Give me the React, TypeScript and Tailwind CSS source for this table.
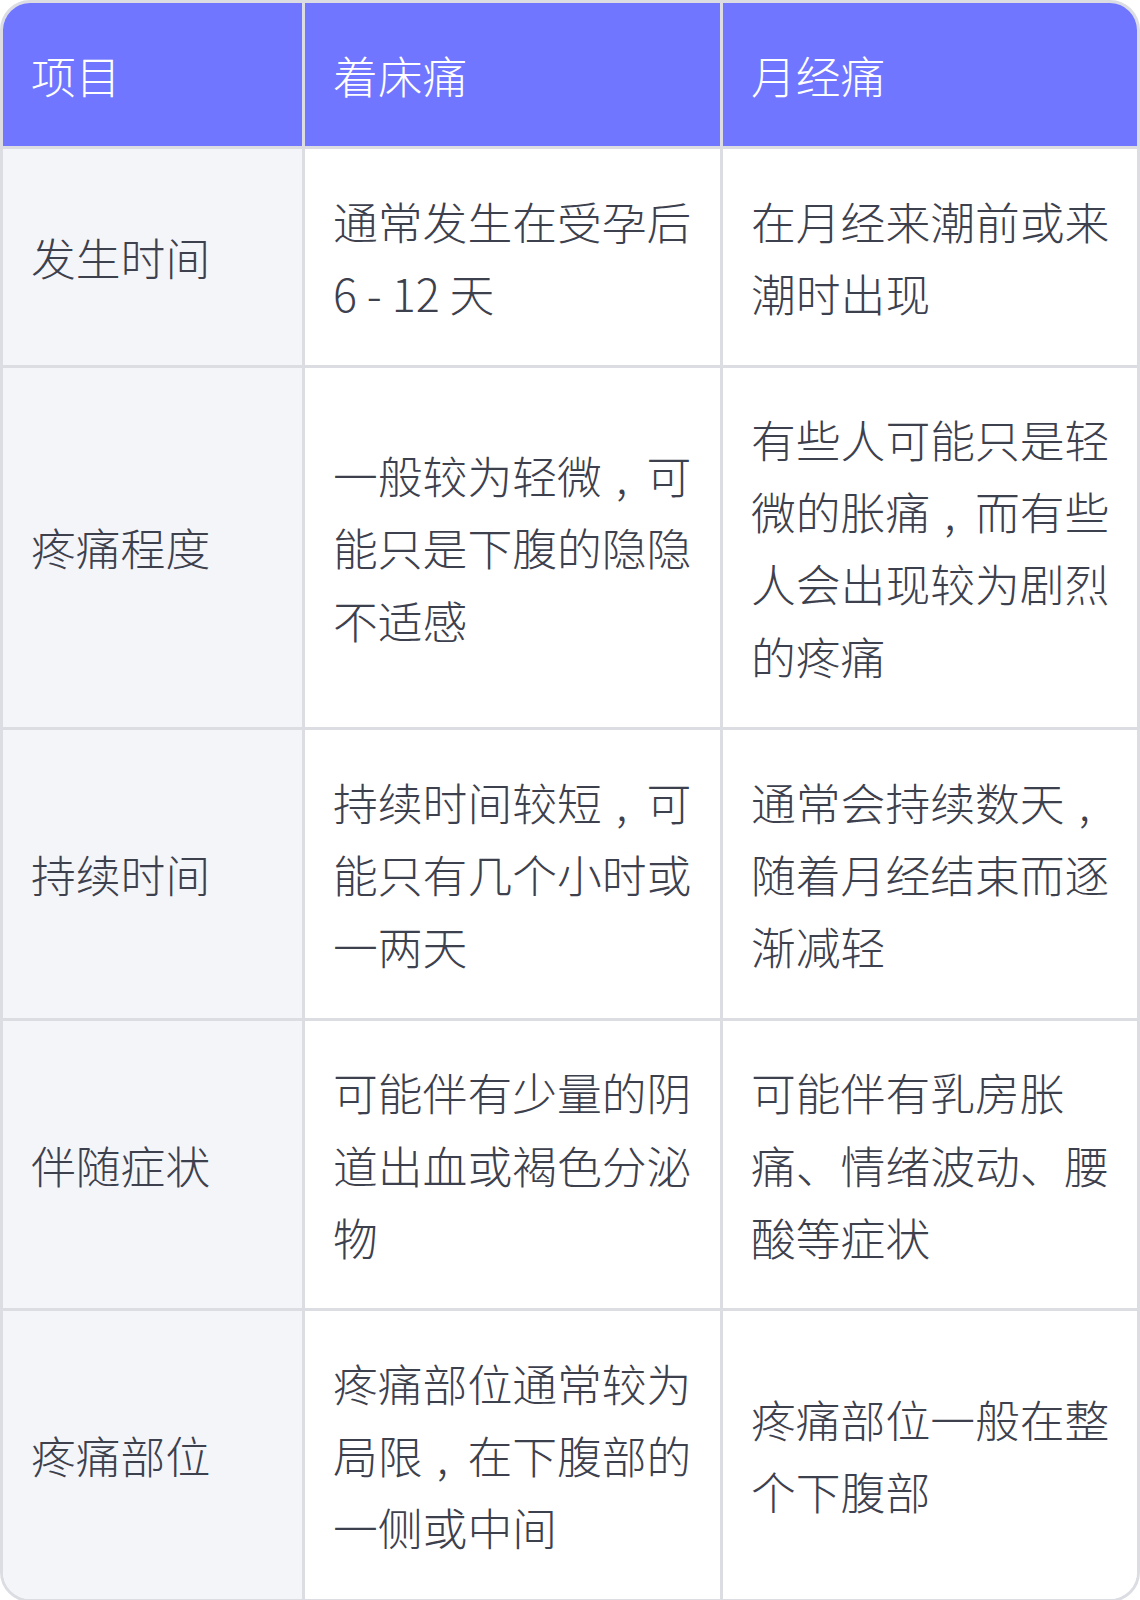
import React from "react";

const rows: [string, string, string][] = [
  ["发生时间", "通常发生在受孕后 6 - 12 天", "在月经来潮前或来潮时出现"],
  ["疼痛程度", "一般较为轻微，可能只是下腹的隐隐不适感", "有些人可能只是轻微的胀痛，而有些人会出现较为剧烈的疼痛"],
  ["持续时间", "持续时间较短，可能只有几个小时或一两天", "通常会持续数天，随着月经结束而逐渐减轻"],
  ["伴随症状", "可能伴有少量的阴道出血或褐色分泌物", "可能伴有乳房胀痛、情绪波动、腰酸等症状"],
  ["疼痛部位", "疼痛部位通常较为局限，在下腹部的一侧或中间", "疼痛部位一般在整个下腹部"],
];

function Text({ s }: { s: string }) {
  const parts = s.split(/(，)/);
  return (
    <span className="break-all">
      {parts.map((p, i) =>
        p === "，" ? (
          <span key={i} className="inline-block w-[1em] text-center pr-[0.12em]">
            ,
          </span>
        ) : (
          <React.Fragment key={i}>{p}</React.Fragment>
        )
      )}
    </span>
  );
}

export default function App() {
  const font = { fontFamily: '"Noto Sans CJK SC", "Noto Sans", sans-serif' };
  return (
    <div className="w-[1140px] bg-white" style={font}>
      <div className="border-[3px] border-[#dcdde3] rounded-[30px] overflow-hidden">
        <div className="grid grid-cols-[302px_418px_1fr] text-[44.8px] leading-[72.3px] font-light">
          {["项目", "着床痛", "月经痛"].map((h, i) => (
            <div
              key={h}
              className={`bg-[#7076ff] text-white pl-[28px] pr-[12px] py-[35.5px] border-b-[3px] border-[#dcdde3] flex items-center ${i < 2 ? "border-r-[3px]" : ""}`}
            >
              {h}
            </div>
          ))}
          {rows.map((r, ri) =>
            r.map((c, ci) => (
              <div
                key={`${ri}-${ci}`}
                className={`pl-[28px] pr-[12px] py-[35.33px] flex items-center text-[#3d404d] border-[#dcdde3] ${ci === 0 ? "bg-[#f4f5f9]" : "bg-white"} ${ci < 2 ? "border-r-[3px]" : ""} ${ri < rows.length - 1 ? "border-b-[3px]" : ""}`}
              >
                <Text s={c} />
              </div>
            ))
          )}
        </div>
      </div>
    </div>
  );
}
